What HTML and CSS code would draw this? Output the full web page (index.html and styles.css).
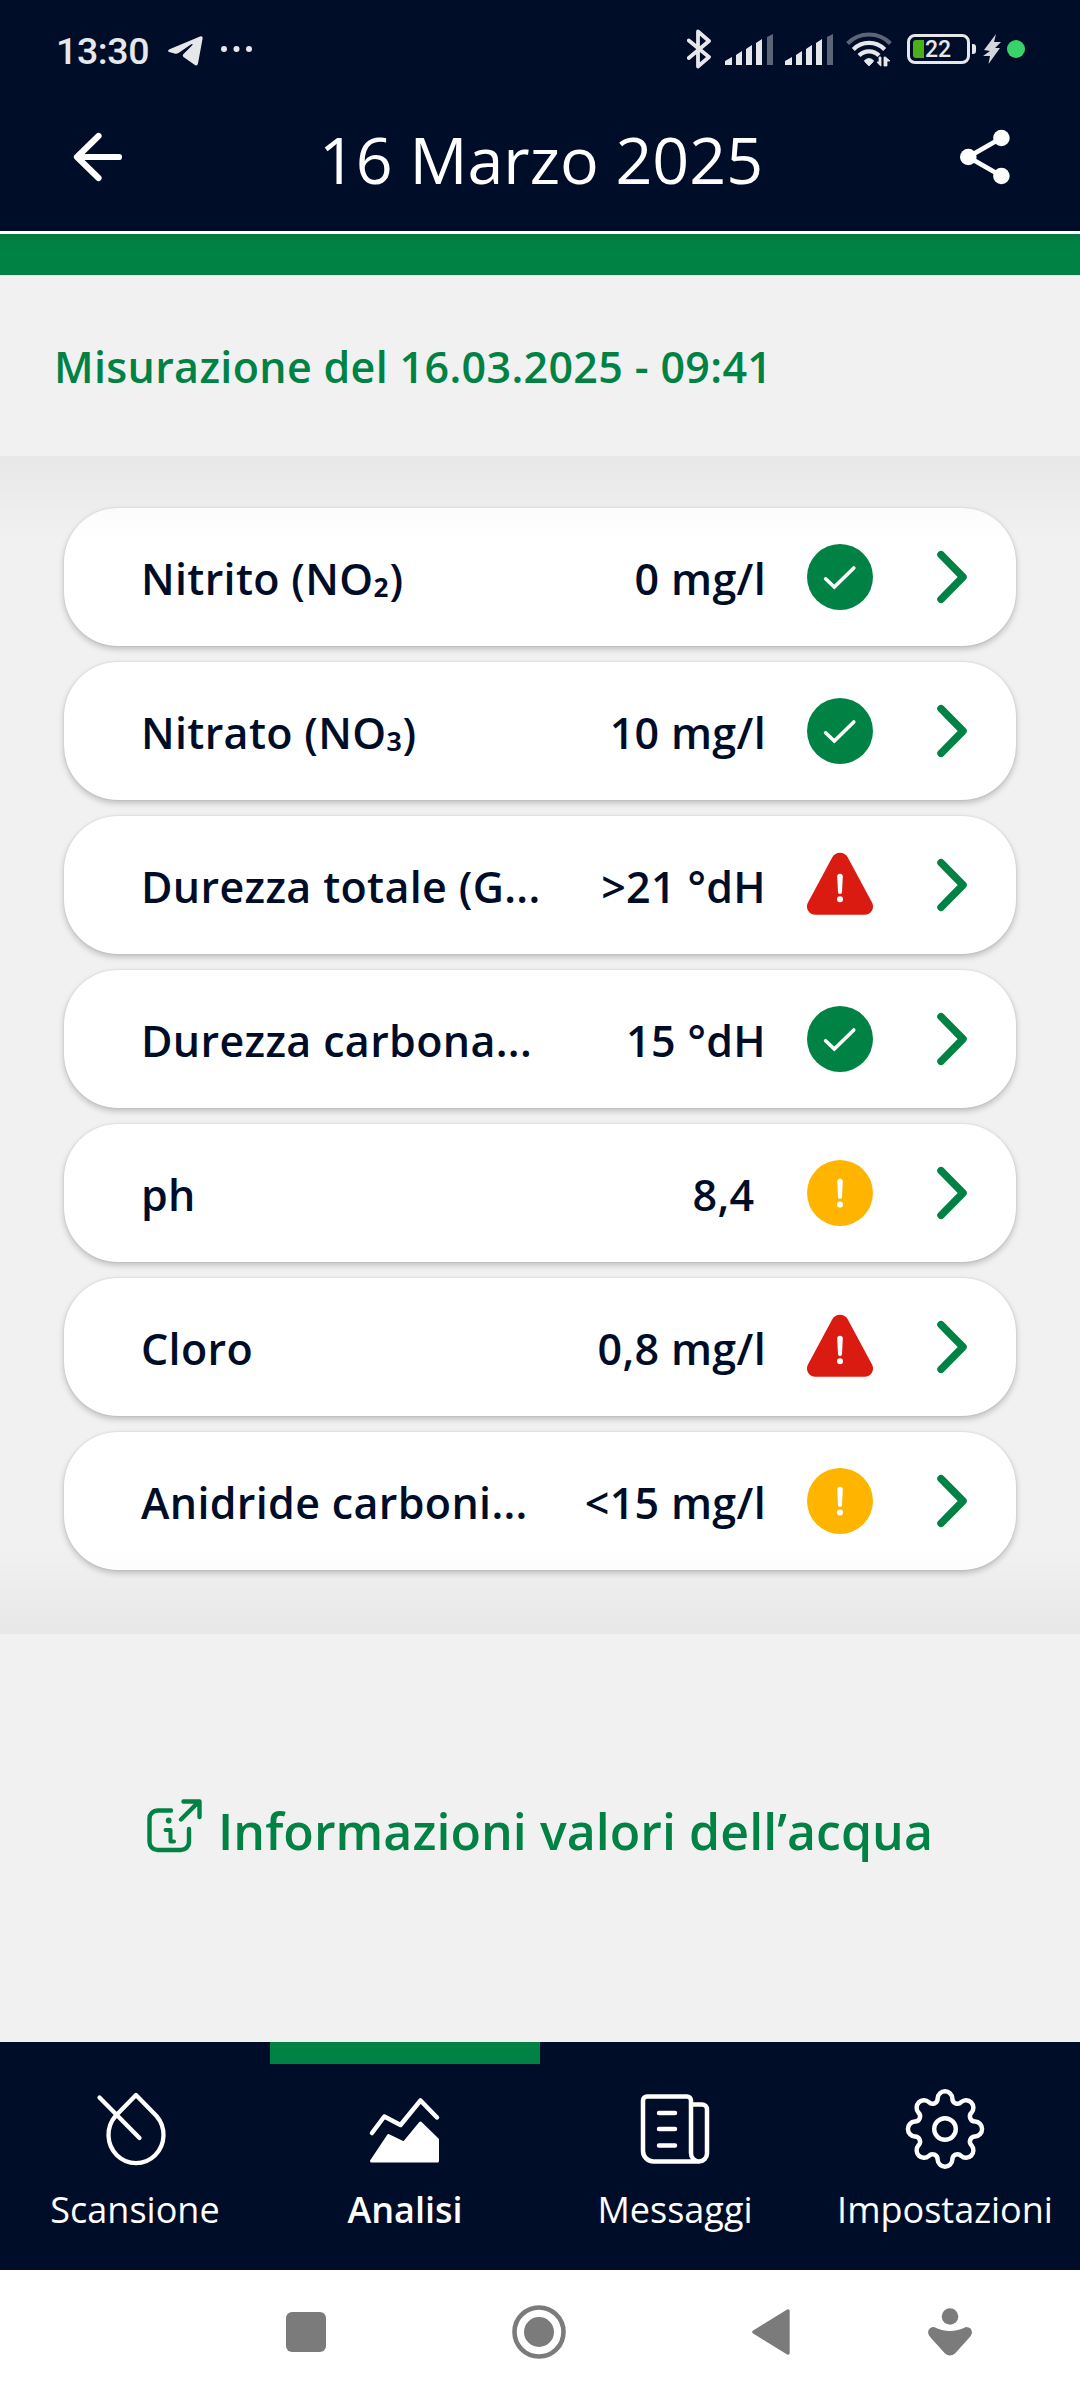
FILE: index.html
```html
<!DOCTYPE html>
<html lang="it">
<head>
<meta charset="utf-8">
<title>16 Marzo 2025</title>
<link rel="stylesheet" href="styles.css">
</head>
<body>
<svg class="defs" width="0" height="0">
  <symbol id="ok" viewBox="0 0 66 66"><circle cx="33" cy="33" r="33" fill="#008244"/><path d="M18.6 34.8 27.3 43 46.8 24" fill="none" stroke="#fff" stroke-width="3.6" stroke-linecap="round"/></symbol>
  <symbol id="warn" viewBox="0 0 66 66"><circle cx="33" cy="33" r="33" fill="#ffb500"/><path d="M30.200 21.500a2.800 2.800 0 0 1 5.600 0l-.8 15.500a2 2 0 0 1-4 0z" fill="#fff"/><circle cx="33" cy="44.600" r="3" fill="#fff"/></symbol>
  <symbol id="alert" viewBox="0 0 66 66"><path d="M25.300 5.300a8.800 8.800 0 0 1 15.400 0L65 50.500a8.300 8.300 0 0 1-7.300 12.300H8.300A8.300 8.300 0 0 1 1 50.500z" fill="#da1b12"/><path d="M30.200 24.500a2.800 2.800 0 0 1 5.600 0l-.8 15.500a2 2 0 0 1-4 0z" fill="#fff"/><circle cx="33" cy="47.200" r="3" fill="#fff"/></symbol>
  <symbol id="chev" viewBox="0 0 32 54"><path d="M5 4.700 27 27 5 49.300" fill="none" stroke="#008244" stroke-width="7.500" stroke-linecap="round" stroke-linejoin="round"/></symbol>
  <symbol id="signal" viewBox="0 0 48 31"><path d="M0 31v-4l7-4v8zM11 31V21l6-4v14zM21 31V15l6-4v20zM31 31V9l6-4v26z" fill="#e6e7eb"/><path d="M42 31V3l6-3v31z" fill="#5c6478"/></symbol>
</svg>
<header class="top">
  <div class="status">
    <span class="clock">13:30</span>
    <svg class="telegram" width="35" height="30" viewBox="0 0 35 30"><path d="M1.500 13.200 32 .6q3-1 2.600 2L30 27.500q-.8 3.200-3.500 1.300L15.500 21q-1.500-1.500 0-3L24.500 9q.5-1.500-1.300-.7L10.500 17q-1.800 1.200-4 .6L1 16q-2-1.500.5-2.800z" fill="#e6e7eb"/></svg>
    <svg class="dots" width="32" height="6" viewBox="0 0 32 6"><g fill="#e6e7eb"><circle cx="3" cy="3" r="3"/><circle cx="15.500" cy="3" r="3"/><circle cx="28" cy="3" r="3"/></g></svg>
    <div class="status-right">
      <svg class="bt" width="24" height="40" viewBox="0 0 24 40"><path d="M1.800 11.500 22 28 11 37.500V2.500L22 12 1.800 29" fill="none" stroke="#e6e7eb" stroke-width="3.800" stroke-linecap="round" stroke-linejoin="round"/></svg>
      <svg class="sig" width="48" height="31"><use href="#signal"/></svg>
      <svg class="sig" width="48" height="31"><use href="#signal"/></svg>
      <svg class="wifi" width="46" height="36" viewBox="0 0 46 36"><g fill="none" stroke-width="4.200"><path d="M1.600 12.500a30 30 0 0 1 42.800 0" stroke="#5c6478"/><path d="M7.300 18.500a22 22 0 0 1 31.400 0M13 24.500a14 14 0 0 1 20 0" stroke="#e6e7eb"/></g><path d="M18.500 29.500q4.500-4 9 0l-.5 1.500-4 4-4-4zM34 34.500 31 31h2V26h2v9zM40 35h-2v-9h1.500l4.500 4h-3v5z" fill="#e6e7eb" stroke="#e6e7eb" stroke-width=".8"/></svg>
      <div class="battery"><i class="charge"></i><span>22</span></div><i class="nub"></i>
      <svg class="bolt" width="18" height="30" viewBox="0 0 18 30"><path d="M13 0 1 16l6 1L0 22h7L5.500 30 17 14h-5L18 8h-7z" fill="#d3d6da"/></svg>
      <i class="live"></i>
    </div>
  </div>
  <div class="titlebar">
    <svg class="back" width="50" height="50" viewBox="0 0 50 50"><path d="M46 25H5M25.500 4 4 25l21.500 21" fill="none" stroke="#fff" stroke-width="6.200" stroke-linecap="round" stroke-linejoin="round"/></svg>
    <h1>16 Marzo 2025</h1>
    <svg class="share" width="50" height="56" viewBox="0 0 50 56"><path d="M41.400 9 8.300 28l33.100 19" fill="none" stroke="#fff" stroke-width="4.800"/><g fill="#fff"><circle cx="41.400" cy="9" r="8.300"/><circle cx="8.300" cy="28" r="8.300"/><circle cx="41.400" cy="47" r="8.300"/></g></svg>
  </div>
</header>
<div class="band"></div>
<h2 class="measure">Misurazione del 16.03.2025 - 09:41</h2>
<main class="list">
  <div class="card"><span class="name">Nitrito (NO<span class="sub">₂</span>)</span><span class="val">0 mg/l</span><svg class="st"><use href="#ok"/></svg><svg class="go"><use href="#chev"/></svg></div>
  <div class="card"><span class="name">Nitrato (NO<span class="sub">₃</span>)</span><span class="val">10 mg/l</span><svg class="st"><use href="#ok"/></svg><svg class="go"><use href="#chev"/></svg></div>
  <div class="card"><span class="name">Durezza totale (G...</span><span class="val">&gt;21 °dH</span><svg class="st"><use href="#alert"/></svg><svg class="go"><use href="#chev"/></svg></div>
  <div class="card"><span class="name">Durezza carbona...</span><span class="val">15 °dH</span><svg class="st"><use href="#ok"/></svg><svg class="go"><use href="#chev"/></svg></div>
  <div class="card"><span class="name">ph</span><span class="val">8,4&nbsp;</span><svg class="st"><use href="#warn"/></svg><svg class="go"><use href="#chev"/></svg></div>
  <div class="card"><span class="name">Cloro</span><span class="val">0,8 mg/l</span><svg class="st"><use href="#alert"/></svg><svg class="go"><use href="#chev"/></svg></div>
  <div class="card"><span class="name">Anidride carboni...</span><span class="val">&lt;15 mg/l</span><svg class="st"><use href="#warn"/></svg><svg class="go"><use href="#chev"/></svg></div>
</main>
<section class="info">
  <a class="link"><svg width="55" height="54" viewBox="0 0 55 54"><g fill="none" stroke="#008244" stroke-width="4.400" stroke-linecap="round" stroke-linejoin="round"><path d="M24 11.500H10.500a8 8 0 0 0-8 8V43a8 8 0 0 0 8 8H34a8 8 0 0 0 8-8V30M34 20.500 51.500 3M36.500 2.500h16v15.500"/><path d="M18.500 31h5v11.500h3.500" stroke-width="4"/></g><circle cx="21.700" cy="21.500" r="2.900" fill="#008244"/></svg><span>Informazioni valori dell’acqua</span></a>
</section>
<nav class="tabs">
  <a class="tab"><svg width="80" height="84" viewBox="0 0 80 84"><path d="M41 8 61.500 29A27.500 28.300 0 1 1 20.500 29zM4.500 10.500 44.500 51" fill="none" stroke="#fff" stroke-width="4.300" stroke-linecap="round" stroke-linejoin="round"/></svg><span>Scansione</span></a>
  <a class="tab active"><svg width="80" height="84" viewBox="0 0 80 84"><path d="M7 46 19.300 29.500 35.500 38 55.500 13.500 72 30.500" fill="none" stroke="#fff" stroke-width="4.500" stroke-linecap="round" stroke-linejoin="round"/><path d="M6.500 74 23.500 48.500 39 56 55.500 36 72.500 52.500V74z" fill="#fff" stroke="#fff" stroke-width="3" stroke-linejoin="round"/></svg><span>Analisi</span></a>
  <a class="tab"><svg width="80" height="84" viewBox="0 0 80 84"><g fill="none" stroke="#fff" stroke-width="4.500" stroke-linecap="round"><path d="M57 74.500H18.500A10.500 10.500 0 0 1 8 64V13.500a4 4 0 0 1 4-4h40a4 4 0 0 1 4 4V66.500a8 8 0 0 0 16 0V22.500a5 5 0 0 0-5-5H56M57 74.500h7"/><path d="M24 26h16M24 42h16M24 58.500h16"/></g></svg><span>Messaggi</span></a>
  <a class="tab"><svg width="80" height="84" viewBox="-40 -42 80 84"><g fill="none" stroke="#fff" stroke-width="4.400"><path d="M-7.290-29.800A7.300 7.300 0 0 1 7.290-29.800A5 5 0 0 0 15.920-26.230A7.300 7.300 0 0 1 26.230-15.920A5 5 0 0 0 29.800-7.290A7.300 7.300 0 0 1 29.800 7.290A5 5 0 0 0 26.230 15.920A7.300 7.300 0 0 1 15.920 26.230A5 5 0 0 0 7.290 29.800A7.300 7.300 0 0 1-7.290 29.800A5 5 0 0 0-15.920 26.230A7.300 7.300 0 0 1-26.230 15.920A5 5 0 0 0-29.800 7.290A7.300 7.300 0 0 1-29.800-7.290A5 5 0 0 0-26.230-15.920A7.300 7.300 0 0 1-15.920-26.230A5 5 0 0 0-7.290-29.800z" transform="scale(1.010 1.025)"/><circle r="10.800"/></g></svg><span>Impostazioni</span></a>
</nav>
<footer class="sysnav">
  <svg width="40" height="40" viewBox="0 0 40 40"><rect width="40" height="40" rx="6"/></svg>
  <svg class="home" width="54" height="54" viewBox="0 0 54 54"><circle cx="27" cy="27" r="24.500" fill="none" stroke="#7b7b7b" stroke-width="4.600"/><circle cx="27" cy="27" r="15"/></svg>
  <svg class="prev" width="38" height="46" viewBox="0 0 38 46"><path d="M2 23 36 2v42z" stroke="#7b7b7b" stroke-width="3.400" stroke-linejoin="round"/></svg>
  <svg class="assist" width="44" height="48" viewBox="0 0 44 48"><circle cx="22" cy="8.500" r="8.300"/><path d="M6 19q16 8 32 0 6 0 6 6-1 3-3 5L27 45.500q-5 4-10 0L3 30Q0 27 0 24q1-5 6-5z"/></svg>
</footer>
</body>
</html>
```
FILE: styles.css
```css
* { box-sizing: border-box; }
body {
  margin: 0;
  width: 1080px;
  height: 2400px;
  overflow: hidden;
  display: flex;
  flex-direction: column;
  background: #f1f1f1;
  font-family: "Open Sans", sans-serif;
  color: #000d28;
}
svg, i { display: block; flex: none; }
.defs { position: absolute; }
.top { height: 234px; background: #000d28; border-bottom: 3px solid #fff; color: #fff; }
.status { height: 98px; padding: 0 55px 0 56px; display: flex; align-items: center; color: #e6e7eb; font-family: Roboto, sans-serif; }
.clock { width: 112px; font-size: 37.500px; font-weight: 500; line-height: 40px; letter-spacing: -.4px; padding-top: 3px; }
.telegram { margin-top: 3px; }
.dots { margin-left: 18px; }
.status-right { margin-left: auto; display: flex; align-items: center; }
.bt { margin-right: 14px; }
.sig { margin-right: 12px; margin-top: 1px; }
.wifi { margin-left: 1px; margin-right: 15px; }
.battery { width: 63px; height: 30px; border: 3px solid #e6e7eb; border-radius: 8px; display: flex; align-items: center; padding-left: 3px; font-size: 23px; font-weight: 500; line-height: 24px; }
.battery span { padding-top: 2px; }
.charge { width: 11px; height: 18px; margin-right: 1px; background: #4caf17; border-radius: 3px 0 0 3px; }
.nub { width: 4px; height: 10px; margin-left: 2px; background: #e6e7eb; border-radius: 0 3px 3px 0; }
.bolt { margin-left: 7px; }
.live { width: 18px; height: 18px; margin-left: 6px; border-radius: 50%; background: #38d46a; }
.titlebar { height: 118px; padding: 0 70px 0 73px; display: flex; align-items: center; justify-content: space-between; }
h1 { margin: 0; font-size: 64.500px; font-weight: 400; line-height: 80px; padding: 3px 1px 0 0; }
.band { height: 41px; background: linear-gradient(#007a40, #008244 12px); }
.measure { margin: 0; height: 181px; padding-left: 54px; font-size: 43px; line-height: 183px; letter-spacing: .34px; font-weight: 600; color: #008244; }
.list { position: relative; height: 1178px; padding: 52px 64px 0; display: flex; flex-direction: column; gap: 16px; }
.list::after {
  content: "";
  position: absolute;
  inset: 0;
  pointer-events: none;
  background: linear-gradient(rgba(0,0,0,.04), transparent 86px, transparent calc(100% - 86px), rgba(0,0,0,.04));
}
.card { height: 138px; border-radius: 54px; background: #fff; display: flex; align-items: center; padding: 0 48px 0 77px; font-size: 43px; font-weight: 600; letter-spacing: .34px; box-shadow: 0 3px 6px rgba(0,0,0,.22), 0 0 2px rgba(0,0,0,.12); }
.name, .val { line-height: 60px; padding-top: 3px; white-space: pre; }
.sub { line-height: 1; vertical-align: 4.500px; }
.val { margin-left: auto; margin-right: 41px; }
.st { width: 66px; height: 66px; }
.go { width: 32px; height: 54px; margin-left: 63px; }
.info { height: 408px; padding-top: 163px; display: flex; justify-content: center; align-items: flex-start; }
.link { display: flex; align-items: flex-start; color: #008244; font-size: 50px; font-weight: 600; line-height: 68px; letter-spacing: .07px; gap: 16px; }
.link svg { margin-top: 2px; }
.tabs { height: 228px; display: flex; background: #000d28; color: #fff; }
.tab { width: 270px; display: flex; flex-direction: column; align-items: center; padding-top: 23px; border-top: 22px solid transparent; font-size: 36px; line-height: 50px; }
.tab span { margin-top: 14px; }
.active { border-top-color: #008244; font-weight: 600; }
.sysnav { height: 130px; padding: 0 0 6px 286px; display: flex; align-items: center; background: #fff; fill: #7b7b7b; }
.home { margin-left: 186px; }
.prev { margin-left: 186px; }
.assist { margin-left: 138px; }
```
